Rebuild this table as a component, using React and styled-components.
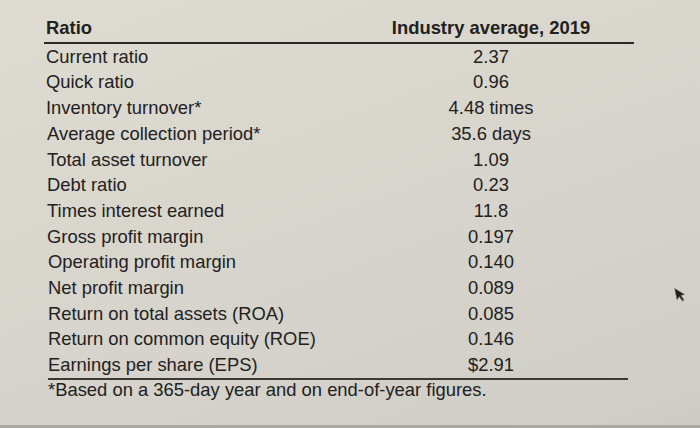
import * as React from "react";
import styled, { createGlobalStyle } from "styled-components";

const rows = [
  ["Current ratio", "2.37"],
  ["Quick ratio", "0.96"],
  ["Inventory turnover*", "4.48 times"],
  ["Average collection period*", "35.6 days"],
  ["Total asset turnover", "1.09"],
  ["Debt ratio", "0.23"],
  ["Times interest earned", "11.8"],
  ["Gross profit margin", "0.197"],
  ["Operating profit margin", "0.140"],
  ["Net profit margin", "0.089"],
  ["Return on total assets (ROA)", "0.085"],
  ["Return on common equity (ROE)", "0.146"],
  ["Earnings per share (EPS)", "$2.91"],
];

function App() {
  return (
    <Page>
      <GlobalStyle />
      <Table>
        <HeaderRow>
          <Cell>Ratio</Cell>
          <ValueCell>Industry average, 2019</ValueCell>
        </HeaderRow>
        <Body>
          {rows.map(([label, value], i) => (
            <Row key={label}>
              {/* the photo is taken at a slight angle, lower rows drift right */}
              <Cell $shift={Math.round(i / 5)}>{label}</Cell>
              <ValueCell>{value}</ValueCell>
            </Row>
          ))}
        </Body>
        <Footnote>*Based on a 365-day year and on end-of-year figures.</Footnote>
      </Table>
      <Cursor viewBox="0 0 12 18" aria-hidden="true">
        <path d="M1 1 L1 14 L4.2 11 L6.6 16.5 L8.6 15.6 L6.3 10.2 L10.5 10 Z" />
      </Cursor>
      <Bezel />
    </Page>
  );
}

const GlobalStyle = createGlobalStyle`
  html, body {
    margin: 0;
    padding: 0;
  }
  body {
    font-family: "Liberation Sans", Arial, sans-serif;
  }
`;

const Page = styled.div`
  position: relative;
  width: 700px;
  height: 428px;
  overflow: hidden;
  display: flex;
  flex-direction: column;
  padding: 15px 0 0 44px;
  box-sizing: border-box;
  background: linear-gradient(
    160deg,
    #dedbd3 0%,
    #d9d6ce 40%,
    #d3d1ca 75%,
    #cdccc6 100%
  );
  color: #222120;
`;

const Table = styled.div`
  width: 590px;
  display: flex;
  flex-direction: column;
  font-size: 18.4px;
`;

const HeaderRow = styled.div`
  display: grid;
  grid-template-columns: 304px 286px;
  line-height: 25.75px;
  font-weight: 700;
  padding-bottom: 1px;
  border-bottom: 2px solid #2a2927;
`;

const Body = styled.div`
  display: flex;
  flex-direction: column;
`;

const Row = styled.div`
  display: grid;
  grid-template-columns: 304px 286px;
  line-height: 25.7px;
`;

const Cell = styled.div`
  padding-left: ${(p) => 2 + (p.$shift || 0)}px;
  white-space: nowrap;
`;

const ValueCell = styled.div`
  text-align: center;
  white-space: nowrap;
`;

const Footnote = styled.div`
  margin: 0 6px 0 4px;
  border-top: 2px solid #3a3936;
  line-height: 20px;
  white-space: nowrap;
`;

const Cursor = styled.svg`
  position: absolute;
  left: 675px;
  top: 286px;
  width: 11px;
  height: 17px;
  transform: rotate(-12deg);
  fill: #1e1d1b;
  stroke: #8d8b86;
  stroke-width: 0.6;
`;

const Bezel = styled.div`
  position: absolute;
  left: 0;
  right: 0;
  bottom: 0;
  height: 3px;
  background: #a9a8a3;
`;

export default App;
